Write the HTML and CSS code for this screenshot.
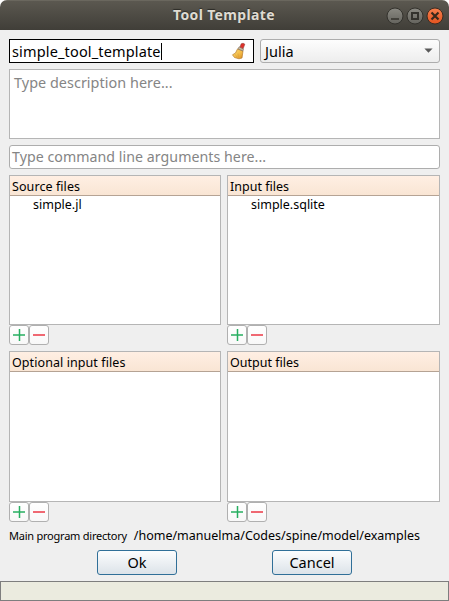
FILE: index.html
```html
<!DOCTYPE html>
<html lang="en">
<head>
<meta charset="utf-8">
<title>Tool Template</title>
<link rel="stylesheet" href="styles.css">
</head>
<body>
<svg class="defs" width="0" height="0">
  <defs>
    <symbol id="plus" viewBox="0 0 18 18"><path d="M3 9H15M9.5 3V15" stroke="#27ae60" stroke-width="1.5" fill="none"/></symbol>
    <symbol id="minus" viewBox="0 0 18 18"><path d="M3 9H15" stroke="#ed4450" stroke-width="1.6" fill="none"/></symbol>
  </defs>
</svg>
<div class="window">
  <header class="titlebar">
    <h1 class="title"><span class="t-title">Tool Template</span></h1>
    <div class="controls">
      <svg width="18" height="18" viewBox="0 0 18 18"><circle cx="9" cy="9" r="8" fill="url(#gray)" stroke="#33322d"/><path d="M5 12H13" stroke="#33322d" stroke-width="1.6"/>
        <defs><linearGradient id="gray" x1="0" y1="0" x2="0" y2="1"><stop offset="0" stop-color="#8a8982"/><stop offset="1" stop-color="#64635d"/></linearGradient></defs></svg>
      <svg width="18" height="18" viewBox="0 0 18 18"><circle cx="9" cy="9" r="8" fill="url(#gray)" stroke="#33322d"/><rect x="6" y="6" width="6" height="6" fill="none" stroke="#33322d" stroke-width="2"/></svg>
      <svg width="18" height="18" viewBox="0 0 18 18"><defs><linearGradient id="red" x1="0" y1="0" x2="0" y2="1"><stop offset="0" stop-color="#f5804e"/><stop offset="1" stop-color="#e4531f"/></linearGradient></defs><circle cx="9" cy="9" r="8" fill="url(#red)" stroke="#3b2c22"/><path d="M5.5 5.5L12.5 12.5M12.5 5.5L5.5 12.5" stroke="#38291b" stroke-width="2.2"/></svg>
    </div>
  </header>
  <main class="form">
    <div class="row">
      <div class="name"><span class="t-name">simple_tool_template</span><i class="caret"></i>
        <svg class="broom" width="16" height="18" viewBox="0 0 16 18"><defs><linearGradient id="gold" x1="0" y1="0" x2="1" y2="1"><stop offset="0" stop-color="#f4df80"/><stop offset=".55" stop-color="#f5bd48"/><stop offset="1" stop-color="#d68a20"/></linearGradient></defs>
          <path d="M6.5 7L4.5 11L1.5 12.8L3.5 15.5L8 16.8L11 16L12 9Z" fill="url(#gold)" stroke="#b87b2c" stroke-width=".7"/><path d="M4.5 12.5L5.5 15M7 11.5L7.2 15.5" stroke="#ca9238" stroke-width=".5"/><path d="M6.9 6.8L8.2 4.8L12.4 6.8L12 9Z" fill="#c5bba4" stroke="#7d6a52" stroke-width=".6"/><path d="M9 5L10.2 1.8Q12.3.5 13.8 2.2L12.2 6.6Z" fill="#df3029" stroke="#93433c" stroke-width=".6"/></svg>
      </div>
      <div class="combo"><span class="t-julia">Julia</span><svg width="9" height="6" viewBox="0 0 9 6"><path d="M.4.5H8.6L4.5 4.8Z" fill="#5a5a5a"/></svg></div>
    </div>
    <div class="description"><span class="t-desc">Type description here...</span></div>
    <div class="arguments"><span class="t-args">Type command line arguments here...</span></div>
    <div class="lists">
      <section><div class="tree"><h2><span class="t-source">Source files</span></h2><p><span class="t-jl">simple.jl</span></p></div>
        <div class="tools"><button><svg><use href="#plus"/></svg></button><button><svg><use href="#minus"/></svg></button></div></section>
      <section><div class="tree"><h2><span class="t-input">Input files</span></h2><p><span class="t-sqlite">simple.sqlite</span></p></div>
        <div class="tools"><button><svg><use href="#plus"/></svg></button><button><svg><use href="#minus"/></svg></button></div></section>
      <section><div class="tree"><h2><span class="t-optional">Optional input files</span></h2></div>
        <div class="tools"><button><svg><use href="#plus"/></svg></button><button><svg><use href="#minus"/></svg></button></div></section>
      <section><div class="tree"><h2><span class="t-output">Output files</span></h2></div>
        <div class="tools"><button><svg><use href="#plus"/></svg></button><button><svg><use href="#minus"/></svg></button></div></section>
    </div>
    <div class="directory"><span class="t-main">Main program directory</span><span class="t-path">/home/manuelma/Codes/spine/model/examples</span></div>
    <div class="actions"><button><span class="t-ok">Ok</span></button><button><span class="t-cancel">Cancel</span></button></div>
  </main>
  <footer class="status"></footer>
</div>
</body>
</html>
```
FILE: styles.css
```css
* { box-sizing: border-box; }
body { margin: 0; background: #fff; color: #000; font: 14px/20px "Noto Sans", sans-serif; overflow: hidden; }
.defs { position: absolute; }
.window { width: 449px; height: 601px; display: flex; flex-direction: column; background: #efefef; border-radius: 7px 7px 0 0; overflow: hidden; }
span { white-space: nowrap; }

.titlebar { flex: none; height: 30px; display: grid; grid-template-columns: 173px 1fr auto; align-items: center; padding-right: 5px; background: linear-gradient(#5b5850, #403e38); border-top: 1px solid #6a675e; }
.title { grid-column: 2; margin: 0 0 2px; font-size: 14px; line-height: 20px; color: #dfdbd2; text-shadow: 0 -1px 1px #2c2b27; }
.controls { display: flex; gap: 2px; }
.controls svg { display: block; }

.form { height: 551px; padding: 9px 9px 0; display: flex; flex-direction: column; }
.row { display: flex; gap: 6px; height: 24px; flex: none; }
.name { width: 245px; display: flex; align-items: center; padding: 0 6px 0 2px; background: #fff; border: 1px solid #000; }
.caret { width: 1px; height: 17px; background: #000; }
.broom { margin-left: auto; }
.combo { width: 180px; display: flex; align-items: center; justify-content: space-between; padding: 0 6px 0 4px; border: 1px solid #adadad; border-radius: 3px; background: linear-gradient(#fdfdfd, #ededed); }
.description { flex: none; width: 431px; height: 70px; margin-top: 6px; padding: 3px 4px; background: #fff; border: 1px solid #b5b5b5; color: #858585; }
.arguments { flex: none; width: 431px; height: 24px; margin-top: 6px; padding: 1px 2px; background: #fff; border: 1px solid #adadad; border-radius: 3px; color: #858585; }

.lists { flex: none; width: 431px; margin-top: 6px; display: grid; grid-template-columns: 212px 213px; grid-template-rows: 170px 171px; gap: 6px; font-size: 12.5px; }
.lists section { display: flex; flex-direction: column; }
.tree { flex: 1; background: #fff; border: 1px solid #b5b5b5; }
.tree h2 { margin: 0; height: 20px; padding-left: 2px; font-size: 12.5px; font-weight: 400; line-height: 21px; background: linear-gradient(#ffefe3, #f9e5d4); border-bottom: 1px solid #b5a394; }
.tree p { margin: 0; padding-left: 23px; line-height: 18px; }
.tools { display: flex; height: 20px; }
.tools button { width: 20px; height: 20px; padding: 0; border: 1px solid #b0b0b0; border-radius: 3px; background: linear-gradient(#fff, #f8f8f8); }
.tools svg { display: block; width: 18px; height: 18px; }

.directory { flex: none; height: 28px; display: flex; align-items: center; }
.t-path { margin-left: auto; margin-right: 20px; }
.actions { display: flex; gap: 95px; padding-left: 88px; }
.actions button { width: 80px; height: 25px; padding: 0; border: 1px solid #306f98; border-radius: 3px; background: linear-gradient(#fcfdfe, #dce3e9); color: #000; font: 14px/20px "Noto Sans", sans-serif; }
.status { height: 20px; background: #ebebdf; border: 1px solid #7e7e7e; }

.t-title { letter-spacing: .35px; }
.t-name { font-size: 14.5px; letter-spacing: .15px; }
.t-desc { font-size: 14.4px; letter-spacing: .04px; }
.t-args { font-size: 14.2px; letter-spacing: .04px; }
.t-julia, .t-ok, .t-cancel { font-size: 14.5px; }
.t-source, .t-optional { letter-spacing: .08px; }
.t-main { font-size: 11px; letter-spacing: -.23px; }
.t-path { font-size: 12.5px; }
```
